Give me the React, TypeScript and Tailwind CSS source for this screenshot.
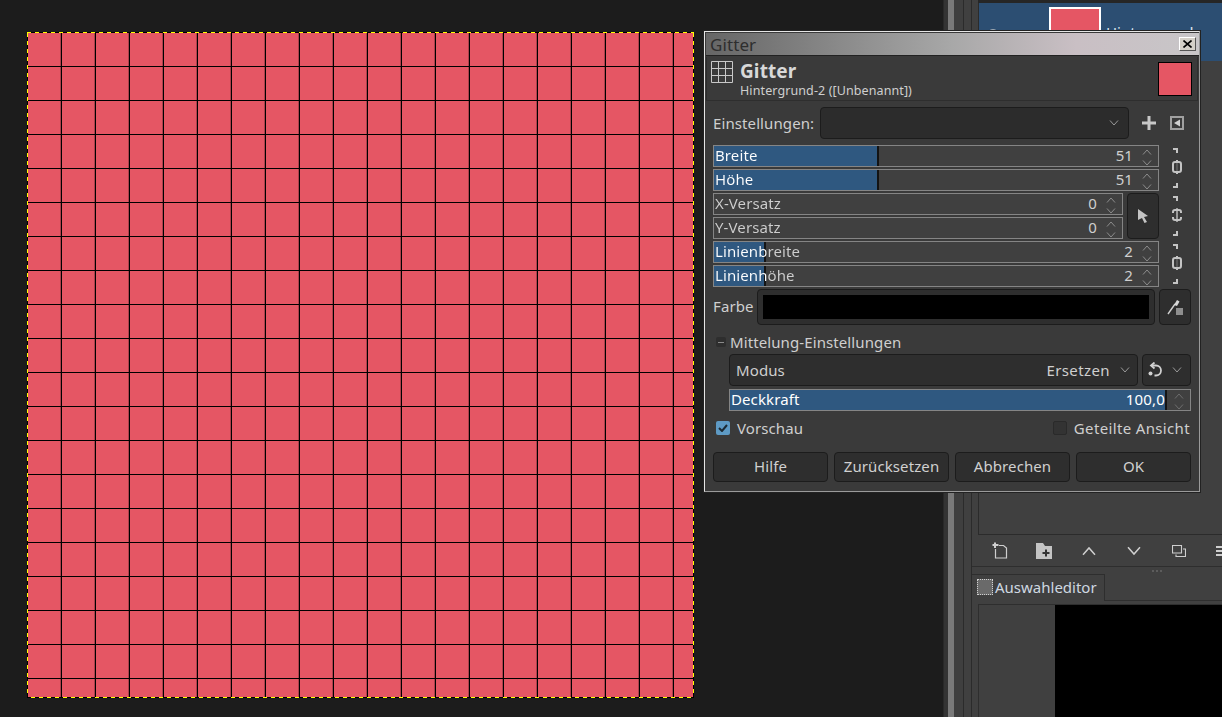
const font = "font-['Noto_Sans',sans-serif]";

const Chevron = ({ up = false, className = "" }: { up?: boolean; className?: string }) => (
  <svg width="10" height="6" viewBox="0 0 10 6" className={className} fill="none" stroke="currentColor" strokeWidth="1">
    <path d={up ? "M1 5.5 L5 1 L9 5.5" : "M1 .5 L5 5 L9 .5"} />
  </svg>
);

interface SpinProps {
  label: string;
  value: string;
  fill?: number;
}

const Spin = ({ label, value, fill = 0 }: SpinProps) => {
  return (
    <div className="relative h-[22px] w-full shrink-0 border border-[#858585] bg-[#404040] pb-[2px] text-[#cfcfcf] flex items-center">
      {fill > 0 && (
        <div
          className="absolute left-0 top-0 bottom-0 bg-[#2f5880] border-r-2 border-[#141414]"
          style={{ width: fill }}
        />
      )}
      <span
        className="relative pl-[1px] whitespace-nowrap bg-clip-text text-transparent"
        style={{ backgroundImage: `linear-gradient(90deg,#ffffff ${fill}px,#cfcfcf ${fill}px)` }}
      >
        {label}
      </span>
      <span className="ml-auto mr-[25px]">{value}</span>
      <div className="absolute right-[6px] top-[3px] flex flex-col gap-[5px] text-[#8c8c8c]">
        <Chevron up />
        <Chevron />
      </div>
    </div>
  );
};

const Chain = ({ broken = false }: { broken?: boolean }) => (
  <svg width="12" height="42" viewBox="0 0 12 42" fill="none" className="text-[#c4c4c4]">
    <path d="M3 2 H7 V6" stroke="currentColor" strokeWidth="2" />
    <path d="M7 36 V40 H3" stroke="currentColor" strokeWidth="2" />
    {broken ? (
      <g stroke="currentColor" strokeWidth="2">
        <path d="M3 18 V17 Q3 15 5 15 H9 Q11 15 11 17 V18" />
        <path d="M3 22 V23 Q3 25 5 25 H9 Q11 25 11 23 V22" />
        <path d="M7 13 V27" strokeWidth="1.4" />
      </g>
    ) : (
      <g stroke="currentColor" strokeWidth="2">
        <path d="M5 15 H9 Q11 15 11 17 V23 Q11 25 9 25 H5 Q3 25 3 23 V17 Q3 15 5 15 Z" />
        <path d="M7 13 V15 M7 25 V27" />
        <path d="M7 16 V24" strokeWidth="1" opacity="0.45" />
      </g>
    )}
  </svg>
);

const DialogButton = ({ label }: { label: string }) => (
  <button className="h-[30px] w-[115px] rounded-[4px] border border-[#1c1c1c] bg-[#2e2e2e] pb-[2px] text-[#d0d0d0]">
    {label}
  </button>
);

const GridDialog = () => {
  return (
    <div className="absolute left-[704px] top-[31px] z-10 h-[461px] w-[496px] border border-t-[#e6e6e6] border-l-[#e6e6e6] border-r-[#9a9a9a] border-b-[#9a9a9a] bg-[#3a3a3a] text-[15px] leading-[20px] tracking-[0.1px] shadow-[0_0_0_1px_#222]">
      <div className="ml-[1px] mt-[1px] flex h-[23px] items-center justify-between bg-[linear-gradient(90deg,#666666,#a8a8a8_50%,#c9bfc4_75%,#c8c6c8)] pl-[4px] pr-[3px] border-b border-[#222222]">
        <span className="pt-[1px] text-[17px] text-[#2e2e2e]">Gitter</span>
        <div className="flex h-[14px] w-[17px] items-center justify-center border border-t-white border-l-white border-r-[#555] border-b-[#555] bg-[#d4d0c8]">
          <svg width="9" height="8" viewBox="0 0 9 8" stroke="#000" strokeWidth="1.6">
            <path d="M.5 .5 L8.5 7.5 M8.5 .5 L.5 7.5" />
          </svg>
        </div>
      </div>

      <div className="mx-[1px] mt-[1px] flex h-[44px] items-start border-x border-b border-[#2e2e2e] pl-[4px] pr-[5px] pt-[3px]">
        <svg width="22" height="22" viewBox="0 0 22 22" fill="none" stroke="#c8c8c8" strokeWidth="1" className="mt-[1px] shrink-0">
          <path d="M.5 .5 H21.5 V21.5 H.5 Z M7.5 .5 V21.5 M14.5 .5 V21.5 M.5 7.5 H21.5 M.5 14.5 H21.5" />
        </svg>
        <div className="ml-[7px] flex flex-col">
          <span className="text-[19px] font-bold leading-[22px] text-[#d8d8d8]">Gitter</span>
          <span className="mt-[2px] text-[12.5px] leading-[14px] text-[#cfcfcf]">Hintergrund-2 ([Unbenannt])</span>
        </div>
        <div className="ml-auto mt-[2px] h-[34px] w-[34px] border border-black bg-[#e55664]" />
      </div>

      <div className="mt-[6px] flex flex-col pl-[8px] pr-[8px]">
        <div className="flex h-[32px] items-center text-[#cfcfcf]">
          <span className="w-[107px] shrink-0 pb-[1px]">Einstellungen:</span>
          <div className="flex h-[32px] w-[309px] items-center justify-end rounded-[4px] border border-[#1c1c1c] bg-[#2c2c2c] pr-[9px] text-[#9a9a9a]">
            <Chevron />
          </div>
          <svg width="14" height="14" viewBox="0 0 14 14" stroke="#c8c8c8" strokeWidth="3" className="ml-[13px]">
            <path d="M7 0 V14 M0 7 H14" />
          </svg>
          <svg width="14" height="14" viewBox="0 0 14 14" className="ml-[14px]">
            <path d="M1 1 H13 V13 H1 Z" fill="none" stroke="#a0a0a0" strokeWidth="2" />
            <path d="M10 3.5 V10.5 L4 7 Z" fill="#d0d0d0" />
          </svg>
        </div>

        <div className="mt-[6px] flex h-[46px] items-center">
          <div className="flex w-[446px] shrink-0 flex-col gap-[2px]">
            <Spin label="Breite" value="51" fill={165} />
            <Spin label="Höhe" value="51" fill={165} />
          </div>
          <div className="ml-[11px]"><Chain /></div>
        </div>

        <div className="mt-[2px] flex h-[46px] items-center">
          <div className="flex w-[410px] shrink-0 flex-col gap-[2px]">
            <Spin label="X-Versatz" value="0" />
            <Spin label="Y-Versatz" value="0" />
          </div>
          <div className="ml-[4px] flex h-[46px] w-[32px] items-center justify-center rounded-[4px] border border-[#1c1c1c] bg-[#2e2e2e]">
            <svg width="12" height="14" viewBox="0 0 12 14" fill="#c4c4c4">
              <path d="M1 0 L11 7 L7 8 L10 13 L7.5 14 L5 9 L1 11 Z" />
            </svg>
          </div>
          <div className="ml-[11px]"><Chain broken /></div>
        </div>

        <div className="mt-[2px] flex h-[46px] items-center">
          <div className="flex w-[446px] shrink-0 flex-col gap-[2px]">
            <Spin label="Linienbreite" value="2" fill={52} />
            <Spin label="Linienhöhe" value="2" fill={52} />
          </div>
          <div className="ml-[11px]"><Chain /></div>
        </div>

        <div className="mt-[2px] flex h-[36px] items-center text-[#cfcfcf]">
          <span className="w-[44px] shrink-0 pb-[2px]">Farbe</span>
          <div className="flex h-[36px] w-[398px] items-center rounded-[4px] border border-[#1c1c1c] bg-[#2e2e2e] px-[5px]">
            <div className="h-[24px] w-full bg-black" />
          </div>
          <div className="ml-[4px] flex h-[36px] w-[32px] items-center justify-center rounded-[4px] border border-[#1c1c1c] bg-[#2e2e2e]">
            <svg width="16" height="16" viewBox="0 0 16 16" fill="none">
              <path d="M1 15 L8 5" stroke="#d0d0d0" strokeWidth="1.4" />
              <path d="M7 6 L10 1 L12.5 2.5 L10 7 Z" fill="#d8d8d8" />
              <rect x="9" y="9" width="7" height="7" fill="#8e8e8e" />
            </svg>
          </div>
        </div>

        <div className="mt-[8px] flex h-[18px] items-center text-[#cfcfcf]">
          <div className="ml-[3px] flex h-[10px] w-[10px] items-center justify-center rounded-[2px] bg-[#2e2e2e]">
            <div className="h-[1px] w-[6px] bg-[#8a8a8a]" />
          </div>
          <span className="ml-[4px] pb-[1px]">Mittelung-Einstellungen</span>
        </div>

        <div className="ml-[16px] mt-[3px] flex h-[32px] gap-[4px] text-[#cfcfcf]">
          <div className="flex w-[409px] items-center rounded-[4px] border border-[#1c1c1c] bg-[#2e2e2e] px-[6px]">
            <span className="pb-[1px]">Modus</span>
            <span className="ml-auto mr-[10px] pb-[1px] tracking-[0.4px]">Ersetzen</span>
            <Chevron className="text-[#9a9a9a] mr-[1px]" />
          </div>
          <div className="flex w-[49px] items-center rounded-[4px] border border-[#1c1c1c] bg-[#2e2e2e] pl-[5px]">
            <svg width="15" height="16" viewBox="0 0 15 16" fill="none" stroke="#d0d0d0" strokeWidth="1.8">
              <path d="M3 3.5 H8 A4.8 4.8 0 0 1 8 13.5 H6.5" />
              <path d="M6.5 .5 L3 3.5 L6.5 6.5" />
              <circle cx="2.5" cy="11.5" r="2" fill="#d0d0d0" stroke="none" />
            </svg>
            <Chevron className="ml-[9px] text-[#9a9a9a]" />
          </div>
        </div>

        <div className="relative ml-[16px] mt-[3px] flex h-[22px] items-center border border-[#858585] bg-[#404040] pb-[2px] text-white">
          <div className="absolute left-0 top-0 bottom-0 w-[437px] border-r-2 border-[#141414] bg-[#2f5880]" />
          <span className="relative pl-[1px]">Deckkraft</span>
          <span className="relative ml-auto mr-[25px] tracking-[0.2px]">100,0</span>
          <div className="absolute right-[6px] top-[3px] flex flex-col gap-[5px] text-[#6e6e6e]">
            <Chevron up />
            <Chevron />
          </div>
        </div>

        <div className="mt-[8px] flex h-[18px] items-center text-[#cfcfcf]">
          <div className="ml-[3px] flex h-[14px] w-[14px] items-center justify-center rounded-[2px] bg-[#5e9ac4]">
            <svg width="10" height="8" viewBox="0 0 10 8" fill="none" stroke="#1d2a33" strokeWidth="2">
              <path d="M1 4 L4 7 L9 1" />
            </svg>
          </div>
          <span className="ml-[7px] pb-[1px]">Vorschau</span>
          <div className="ml-auto h-[14px] w-[14px] rounded-[2px] border border-[#2a2a2a] bg-[#333333]" />
          <span className="ml-[7px] mr-[1px] pb-[1px] tracking-[0.35px]">Geteilte Ansicht</span>
        </div>

        <div className="mt-[15px] flex gap-[6px]">
          <DialogButton label="Hilfe" />
          <DialogButton label="Zurücksetzen" />
          <DialogButton label="Abbrechen" />
          <DialogButton label="OK" />
        </div>
      </div>
    </div>
  );
};

const LayerToolbar = () => (
  <div className="flex h-[31px] items-center pl-[14px] text-[#cfcfcf] overflow-hidden">
    <svg width="16" height="17" viewBox="0 0 16 17" fill="none" stroke="#cfcfcf" strokeWidth="1.2" className="shrink-0">
      <path d="M7 3.5 H11.5 L14.5 6 V16 H3.5 V7" />
      <path d="M3 0.5 V6 M0.5 3 H6.5" strokeWidth="2" />
    </svg>
    <svg width="16" height="16" viewBox="0 0 16 16" className="ml-[28px] shrink-0">
      <path d="M0 0 H7 L9 3 H16 V16 H0 Z" fill="#c4c4c4" />
      <path d="M10 6.5 V13.5 M6.5 10 H13.5" stroke="#333" strokeWidth="2" />
    </svg>
    <Chevron up className="ml-[32px] shrink-0 scale-150 text-[#cfcfcf]" />
    <Chevron className="ml-[35px] shrink-0 scale-150 text-[#cfcfcf]" />
    <svg width="14" height="12" viewBox="0 0 14 12" fill="none" stroke="#cfcfcf" strokeWidth="1.1" className="ml-[33px] shrink-0">
      <path d="M.5 .5 H9.5 V8 H.5 Z" />
      <path d="M11 4 H13.5 V11.5 H4 V9.5" />
    </svg>
    <div className="ml-[30px] flex w-[6px] shrink-0 flex-col gap-[2px]">
      <div className="h-[2px] bg-[#cfcfcf]" />
      <div className="h-[2px] bg-[#cfcfcf]" />
      <div className="h-[2px] bg-[#cfcfcf]" />
    </div>
  </div>
);

const Dock = () => {
  return (
    <div className="flex h-full w-[250px] shrink-0 flex-col bg-[#404040] overflow-hidden">
      <div className="flex h-[567px] shrink-0 flex-col border-b border-[#2e2e2e] pl-[6px]">
        <div className="h-[3px] shrink-0 bg-[#262626]" />
        <div className="h-[532px] shrink-0 border-l border-b border-[#2b2b2b]">
          <div className="flex h-[58px] items-start bg-[#2c4e72] pl-[6px] pt-[4px]">
            <svg width="16" height="12" viewBox="0 0 16 12" fill="none" stroke="#c8c8c8" strokeWidth="1.5" className="mt-[21px] shrink-0">
              <path d="M1 6 Q8 -2 15 6 Q8 14 1 6 Z" />
            </svg>
            <div className="ml-[48px] h-[52px] w-[52px] shrink-0 border-2 border-white bg-[#e55664]" />
            <span className="ml-[5px] mt-[14px] whitespace-nowrap text-[15px] text-[#dfe8f0]">Hintergrund</span>
          </div>
        </div>
        <LayerToolbar />
      </div>
      <div className="flex h-[7px] shrink-0 items-center justify-center gap-[2px] pl-[120px]">
        <div className="h-[2px] w-[2px] bg-[#5c5c5c]" />
        <div className="h-[2px] w-[2px] bg-[#5c5c5c]" />
        <div className="h-[2px] w-[2px] bg-[#5c5c5c]" />
      </div>
      <div className="flex h-[27px] shrink-0">
        <div className="flex w-[133px] shrink-0 items-center border-t border-r border-[#2e2e2e] pb-[2px] pl-[5px] text-[15px] text-[#cfd8e0]">
          <div className="h-[16px] w-[16px] shrink-0 border border-dotted border-[#d0d0d0] bg-[#6a6a6a]" />
          <span className="ml-[2px]">Auswahleditor</span>
        </div>
        <div className="flex-1 border-b border-[#2e2e2e]" />
      </div>
      <div className="h-[3px] shrink-0" />
      <div className="ml-[6px] flex min-h-0 flex-1 border-l border-t border-[#2e2e2e]">
        <div className="w-[76px] shrink-0" />
        <div className="flex-1 bg-black" />
      </div>
    </div>
  );
};

const App = () => {
  return (
    <div className={`relative flex h-[717px] w-[1222px] overflow-hidden bg-[#1c1c1c] ${font}`}>
      <div className="w-[943px] shrink-0 pl-[27px] pt-[32px]">
        <div className="flex h-[666px] w-[667px] flex-col">
          <div className="h-[1px] shrink-0 bg-[repeating-linear-gradient(90deg,#ffff00_0_4px,#000000_4px_8px)]" />
          <div className="flex min-h-0 flex-1">
            <div className="w-[1px] shrink-0 bg-[repeating-linear-gradient(180deg,#ffff00_0_4px,#000000_4px_8px)]" />
            <div className="flex-1 bg-[#e55664] bg-[linear-gradient(90deg,transparent_32px,rgba(0,0,0,0.25)_32px,rgba(0,0,0,0.25)_33px,#000000_33px),linear-gradient(180deg,transparent_33px,#000000_33px)] bg-[length:34px_34px]" />
            <div className="w-[1px] shrink-0 bg-[repeating-linear-gradient(180deg,#ffff00_0_4px,#000000_4px_8px)]" />
          </div>
          <div className="h-[1px] shrink-0 bg-[repeating-linear-gradient(90deg,#000000_0_4px,#ffff00_4px_8px)]" />
        </div>
      </div>
      <div className="h-full w-[5px] shrink-0 border-l border-[#282828] bg-[#333333]" />
      <div className="h-full w-[6px] shrink-0 bg-[#7a7a7a]" />
      <div className="h-full w-[10px] shrink-0 border-r border-[#2b2b2b] bg-[#3f3f3f]" />
      <div className="h-full w-[8px] shrink-0 border-r border-[#2b2b2b] bg-[#404040]" />
      <Dock />
      <GridDialog />
    </div>
  );
};

export default App;
